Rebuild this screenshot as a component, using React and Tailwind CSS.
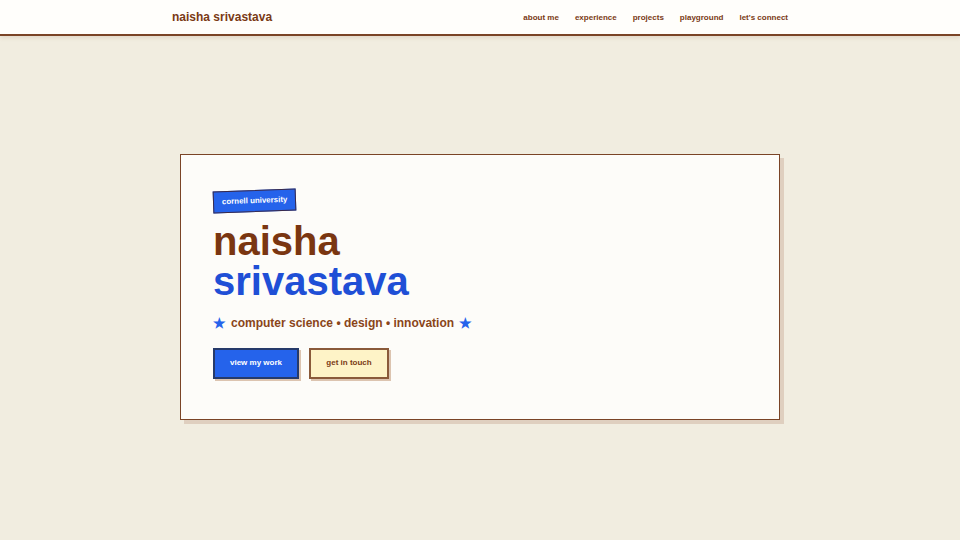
import React from 'react';

const links = ['about me', 'experience', 'projects', 'playground', "let's connect"];

function Header() {
  return (
    <header className="h-[36px] bg-[#fffefb] border-b-2 border-[#7a4426] shadow-[0_2px_4px_rgba(120,70,30,0.12)]">
      <div className="w-[616px] mx-auto h-full flex items-center justify-between">
        <span className="text-[12px] font-bold text-[#7a3a15]">naisha srivastava</span>
        <nav className="flex items-center gap-[16px] text-[8px] font-bold text-[#7a3a15] pt-[1px]">
          {links.map(l => (
            <a key={l} href="#" className="hover:underline">{l}</a>
          ))}
        </nav>
      </div>
    </header>
  );
}

function Hero() {
  return (
    <div className="w-[600px] mx-auto mt-[118px] bg-[#fdfcf9] border-[1.5px] border-[#7a4426] shadow-[4px_4px_0_#dfcfbf] px-[32px] pt-[31px] pb-[40px]">
      <span className="inline-block -rotate-2 bg-[#2563eb] border border-[#3a2a4a] text-white text-[7.9px] font-bold px-[8px] py-[6px] leading-none">
        cornell university
      </span>
      <h1 className="mt-[9px] text-[40px] font-bold leading-[40px]">
        <span className="block text-[#7a3611]">naisha</span>
        <span className="block text-[#1f4fd6]">srivastava</span>
      </h1>
      <p className="mt-[12px] flex items-center gap-[5px] text-[12px] font-bold text-[#8a4519]">
        <span className="text-[#2563eb] text-[14px]">★</span>
        computer science • design • innovation
        <span className="text-[#2563eb] text-[14px]">★</span>
      </p>
      <div className="mt-[14px] flex gap-[10px]">
        <button className="w-[86px] h-[31px] bg-[#2563eb] border-2 border-[#263a6a] text-white text-[8px] font-bold shadow-[2px_2px_0_#dcc4b0]">
          view my work
        </button>
        <button className="w-[80px] h-[31px] bg-[#fef3c7] border-2 border-[#8a5a3a] text-[#7a3a15] text-[8px] font-bold shadow-[2px_2px_0_#dcc4b0]">
          get in touch
        </button>
      </div>
    </div>
  );
}

export default function App() {
  return (
    <div className="min-h-[540px] bg-[#f1ede0]" style={{ fontFamily: '"Liberation Sans", Arial, sans-serif' }}>
      <Header />
      <Hero />
    </div>
  );
}
